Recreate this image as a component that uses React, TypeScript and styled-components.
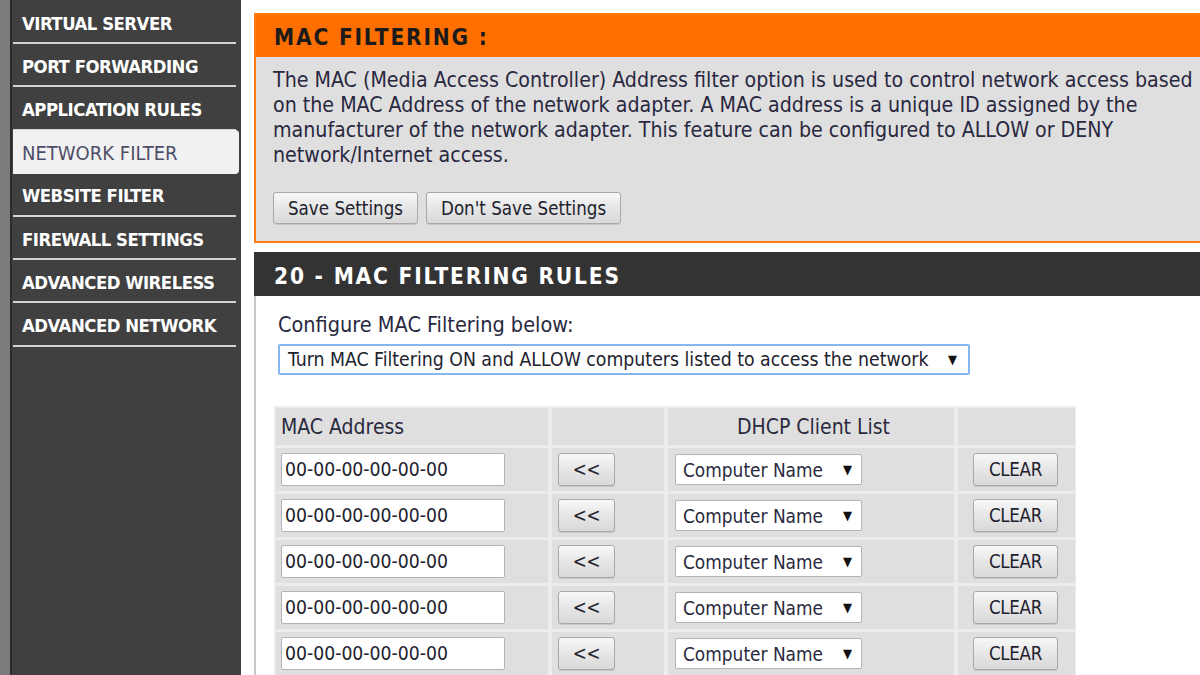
import React from "react";
import styled, { createGlobalStyle } from "styled-components";

const Global = createGlobalStyle`
  html, body { margin: 0; padding: 0; background: #fff; }
  body { font-family: "DejaVu Sans Condensed", "DejaVu Sans", sans-serif; overflow: hidden; }
  * { box-sizing: border-box; }
`;

const Page = styled.div`
  display: flex;
  width: 1200px;
  height: 675px;
  overflow: hidden;
`;

const Strip = styled.div`
  width: 12px;
  flex: none;
  background: #7b7b7b;
  border-right: 2px solid #2c2c2c;
`;

const Sidebar = styled.nav`
  width: 229px;
  flex: none;
  background: #404040;
  padding: 1px 0 0 1px;
  display: flex;
  flex-direction: column;
`;

const MenuItem = styled.div<{ $active?: boolean }>`
  flex: none;
  width: ${(p) => (p.$active ? "226px" : "223px")};
  height: ${(p) => (p.$active ? "44px" : "43.2px")};
  margin-top: ${(p) => (p.$active ? "-1px" : "0")};
  margin-bottom: ${(p) => (p.$active ? "0.2px" : "0")};
  display: flex;
  align-items: center;
  padding: 3px 0 0 9px;
  font-size: ${(p) => (p.$active ? "20px" : "18.4px")};
  font-weight: ${(p) => (p.$active ? "normal" : "bold")};
  letter-spacing: ${(p) => (p.$active ? "0" : "-0.5px")};
  color: ${(p) => (p.$active ? "#4e4d68" : "#ffffff")};
  background: ${(p) => (p.$active ? "#f1f1f1" : "transparent")};
  border-radius: ${(p) => (p.$active ? "0 4px 4px 0" : "0")};
  border-bottom: ${(p) => (p.$active ? "none" : "2px solid #d4d4d4")};
`;

const Main = styled.main`
  flex: 1;
  min-width: 0;
  background: #fff;
  padding: 13px 0 0 13px;
  display: flex;
  flex-direction: column;
  overflow: hidden;
`;

const OrangeBox = styled.section`
  flex: none;
  width: 960px;
  border: 2px solid #ff7a10;
  border-right: none;
  background: #dfdfdf;
`;

const OrangeHeader = styled.h2`
  margin: 0;
  height: 42px;
  background: #ff6f00;
  display: flex;
  align-items: center;
  padding: 2px 0 0 18px;
  font-size: 22.5px;
  font-weight: bold;
  letter-spacing: 1.8px;
  color: #1b1b1b;
`;

const OrangeBody = styled.div`
  padding: 10px 0 17px 17px;
`;

const Paragraph = styled.p`
  margin: 0;
  font-size: 21.2px;
  line-height: 25px;
  color: #29283f;
  white-space: nowrap;
`;

const ButtonRow = styled.div`
  display: flex;
  gap: 8px;
  margin-top: 25px;
`;

const Button = styled.button<{ $w?: number; $h?: number }>`
  height: ${(p) => p.$h ?? 32}px;
  width: ${(p) => (p.$w ? `${p.$w}px` : "auto")};
  padding: 0 14px;
  font-family: inherit;
  font-size: 18.6px;
  color: #22222e;
  background: linear-gradient(#f8f8f8, #e6e6e6 50%, #d9d9d9);
  border: 1px solid #a8a8a8;
  border-radius: 3px;
  box-shadow: 0 1px 0 #c8c8c8;
`;

const SmallButton = styled(Button)`
  padding: 0;
  font-size: 18.6px;
  letter-spacing: -0.3px;
`;

const DarkBox = styled.section`
  margin-top: 9px;
  width: 960px;
  border-left: 2px solid #c8c8c8;
  flex: 1;
`;

const DarkHeader = styled.h2`
  margin: 0 0 0 -2px;
  height: 44px;
  background: #333333;
  display: flex;
  align-items: center;
  padding: 4px 0 0 20px;
  font-size: 22.5px;
  font-weight: bold;
  letter-spacing: 1.8px;
  color: #ffffff;
`;

const Content = styled.div`
  padding: 14px 0 0 22px;
`;

const Label = styled.div`
  font-size: 21.5px;
  color: #29283f;
  height: 30px;
  line-height: 30px;
`;

const ModeSelect = styled.div`
  margin-top: 4px;
  width: 692px;
  height: 31px;
  border: 2px solid #86b6ea;
  border-radius: 2px;
  background: #fff;
  display: flex;
  align-items: center;
  justify-content: space-between;
  padding: 0 11px 0 8px;
  font-size: 19.3px;
  color: #22222e;
`;

const Arrow = styled.span`
  font-size: 13px;
  color: #111;
`;

const Grid = styled.div`
  margin-top: 31px;
  margin-left: -4px;
  width: 802px;
  display: grid;
  grid-template-columns: 272px 112px 286px 117px;
  grid-template-rows: 37px repeat(5, 43px);
  gap: 3px 4px;
  padding: 2px;
  background: #ececec;
`;

const Cell = styled.div<{ $center?: boolean; $pad?: number }>`
  background: #dfdfdf;
  display: flex;
  align-items: center;
  justify-content: ${(p) => (p.$center ? "center" : "flex-start")};
  padding: 0 0 0 ${(p) => p.$pad ?? 5}px;
`;

const HeadCell = styled(Cell)`
  font-size: 21px;
  color: #2a2a3e;
`;

const MacInput = styled.div`
  width: 224px;
  height: 33px;
  background: #fff;
  border: 1px solid #b4b4b4;
  border-radius: 2px;
  display: flex;
  align-items: center;
  padding-left: 3px;
  font-size: 19.2px;
  color: #22222e;
`;

const ClientSelect = styled.div`
  width: 187px;
  height: 31px;
  background: #fff;
  border: 1px solid #b4b4b4;
  border-radius: 2px;
  display: flex;
  align-items: center;
  justify-content: space-between;
  padding: 0 9px 0 7px;
  font-size: 18.9px;
  color: #2a2a3e;
`;

const menu = [
  "VIRTUAL SERVER",
  "PORT FORWARDING",
  "APPLICATION RULES",
  "NETWORK FILTER",
  "WEBSITE FILTER",
  "FIREWALL SETTINGS",
  "ADVANCED WIRELESS",
  "ADVANCED NETWORK",
];

export default function App() {
  return (
    <>
      <Global />
      <Page>
        <Strip />
        <Sidebar>
          {menu.map((m) => (
            <MenuItem key={m} $active={m === "NETWORK FILTER"}>
              {m}
            </MenuItem>
          ))}
        </Sidebar>
        <Main>
          <OrangeBox>
            <OrangeHeader>MAC FILTERING :</OrangeHeader>
            <OrangeBody>
              <Paragraph>
                The MAC (Media Access Controller) Address filter option is used to control network access based
                <br />
                on the MAC Address of the network adapter. A MAC address is a unique ID assigned by the
                <br />
                manufacturer of the network adapter. This feature can be configured to ALLOW or DENY
                <br />
                network/Internet access.
              </Paragraph>
              <ButtonRow>
                <Button>Save Settings</Button>
                <Button>Don't Save Settings</Button>
              </ButtonRow>
            </OrangeBody>
          </OrangeBox>
          <DarkBox>
            <DarkHeader>20 - MAC FILTERING RULES</DarkHeader>
            <Content>
              <Label>Configure MAC Filtering below:</Label>
              <ModeSelect>
                <span>Turn MAC Filtering ON and ALLOW computers listed to access the network</span>
                <Arrow>▼</Arrow>
              </ModeSelect>
              <Grid>
                <HeadCell>MAC Address</HeadCell>
                <HeadCell />
                <HeadCell $center>DHCP Client List</HeadCell>
                <HeadCell />
                {[0, 1, 2, 3, 4].map((i) => (
                  <React.Fragment key={i}>
                    <Cell>
                      <MacInput>00-00-00-00-00-00</MacInput>
                    </Cell>
                    <Cell $pad={6}>
                      <SmallButton $w={57} $h={33}>&lt;&lt;</SmallButton>
                    </Cell>
                    <Cell $pad={7}>
                      <ClientSelect>
                        <span>Computer Name</span>
                        <Arrow>▼</Arrow>
                      </ClientSelect>
                    </Cell>
                    <Cell $pad={15}>
                      <SmallButton $w={85} $h={33}>CLEAR</SmallButton>
                    </Cell>
                  </React.Fragment>
                ))}
              </Grid>
            </Content>
          </DarkBox>
        </Main>
      </Page>
    </>
  );
}
